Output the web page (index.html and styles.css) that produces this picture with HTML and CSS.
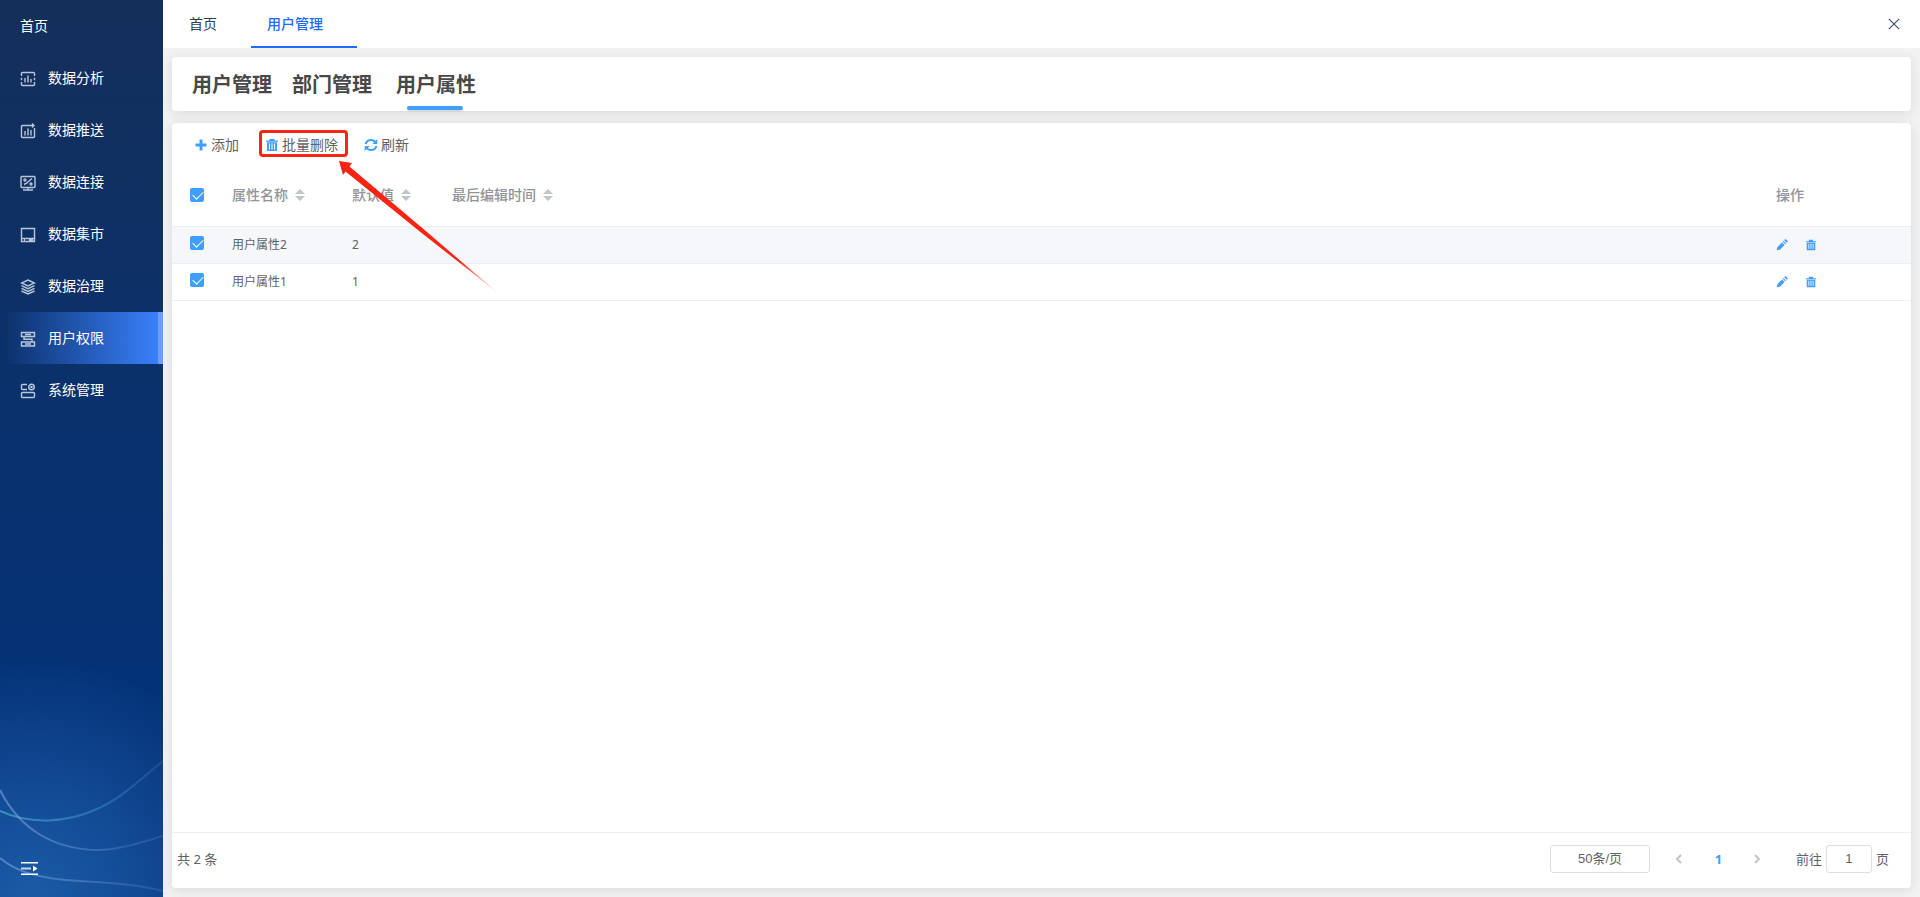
FILE: index.html
```html
<!DOCTYPE html>
<html lang="zh-CN">
<head>
<meta charset="utf-8">
<title>用户管理</title>
<link rel="stylesheet" href="styles.css">
</head>
<body>
<svg class="defs" aria-hidden="true">
  <symbol id="i-trash" viewBox="0 0 14 14"><path fill="currentColor" fill-rule="evenodd" d="M4.500 1h5v1.500H13v1.300H1V2.500h3.500zM2 4.300h10V13H2zM4 5.500v6h1v-6zm2.500 0v6h1v-6zm2.500 0v6h1v-6z"/></symbol>
  <symbol id="i-edit" viewBox="0 0 14 14"><path fill="currentColor" d="M8.800 2.200l3 3-1 1-3-3zM7 4l3 3-5.500 5.400L.800 13.200l.8-3.700zM9.600 1.400l.7-.7c.5-.5 1.100-.5 1.600 0l1.400 1.400c.5.500.5 1.100 0 1.600l-.7.7z"/></symbol>
  <symbol id="i-sort" viewBox="0 0 10 14"><path fill="currentColor" d="M5 1l5 5H0zM5 13l5-5H0z"/></symbol>
</svg>
<div class="app">
  <aside class="side">
    <svg class="waves" viewBox="0 0 163 217" preserveAspectRatio="none" fill="none" aria-hidden="true">
      <defs>
        <linearGradient id="w1"><stop offset="0" stop-color="#3fa3cc" stop-opacity=".8"/><stop offset="1" stop-color="#3f86cc" stop-opacity=".25"/></linearGradient>
        <linearGradient id="w2"><stop offset="0" stop-color="#7fa4e0" stop-opacity=".6"/><stop offset="1" stop-color="#7fa4e0" stop-opacity=".15"/></linearGradient>
      </defs>
      <path stroke="url(#w1)" stroke-width="2" d="M0 131C30 145 66 143 97 129 122 118 142 98 163 81"/>
      <path stroke="url(#w2)" stroke-width="2" d="M0 110C20 150 55 170 100 170 124 169 145 161 163 156"/>
      <path stroke="url(#w2)" stroke-width="2" d="M0 178C15 191 38 199 80 201 110 203 138 204 163 211"/>
    </svg>
    <nav class="menu">
      <a class="item" href="#">首页</a>
      <a class="item" href="#"><svg class="mi" viewBox="0 0 16 16"><path d="M1.500 5V2.500q0-1 1-1h11q1 0 1 1V5M1.500 11v2.500q0 1 1 1h11q1 0 1-1V11M1.500 6.800v2.400M14.500 6.800v2.400M5 7v4.500M8 4.500v7M11 8v3.500"/></svg>数据分析</a>
      <a class="item" href="#"><svg class="mi" viewBox="0 0 16 16"><path d="M14.500 5v8.500q0 1-1 1h-11q-1 0-1-1v-10q0-1 1-1H13.500M12 .500l2 2-2 2M5 8v4.500M8 5.500v7M11 7v5.500"/></svg>数据推送</a>
      <a class="item" href="#"><svg class="mi" viewBox="0 0 16 16"><path d="M2 1.500h12q1 0 1 1v9q0 1-1 1H2q-1 0-1-1v-9q0-1 1-1zM3 15h10M8 12.500V15M4 9.500L7 8l2-2 3-2.500"/><circle cx="5" cy="5" r="1"/><circle cx="11" cy="9" r="1"/></svg>数据连接</a>
      <a class="item" href="#"><svg class="mi" viewBox="0 0 16 16"><path d="M1.500 1.500h13v13h-13zM1.500 11.500h13M4 13h1M9 13h4"/></svg>数据集市</a>
      <a class="item" href="#"><svg class="mi" viewBox="0 0 16 16"><path d="M8 1l6.500 3L8 7 1.500 4zM1.500 6.700L8 9.700l6.500-3M1.500 9.400L8 12.400l6.500-3M1.500 12L8 15l6.500-3"/></svg>数据治理</a>
      <a class="item active" href="#" aria-current="page"><svg class="mi" viewBox="0 0 16 16"><path d="M1.500 1.500h13V5.500h-13zM1.500 11h13v4h-13zM5 3.500h6M5 13h6M4 5.500v2.800h8V11"/></svg>用户权限</a>
      <a class="item" href="#"><svg class="mi" viewBox="0 0 16 16"><path d="M7 1.500H2.500q-1 0-1 1v3q0 1 1 1H7M2.500 9.500h11q1 0 1 1v3q0 1-1 1h-11q-1 0-1-1v-3q0-1 1-1z"/><circle cx="11.500" cy="4" r="2.800"/><circle cx="11.500" cy="4" r=".6"/></svg>系统管理</a>
    </nav>
    <button class="fold" aria-label="展开菜单"><svg viewBox="0 0 17 13"><path fill="#fff" d="M0 0h17v1.500H0zM0 11.500h17V13H0zM12 3.500l4.500 3-4.500 3z"/><path fill="#c5d5ea" d="M0 5.500h10v2H0z"/></svg></button>
  </aside>
  <div class="main">
    <header class="tabs">
      <a class="tab" href="#">首页</a>
      <a class="tab on" href="#">用户管理</a>
      <button class="close" aria-label="关闭"><svg viewBox="0 0 12 12"><path fill="none" stroke="#41536a" stroke-width="1.200" d="M.800.800l10.400 10.400M11.200.800L.800 11.200"/></svg></button>
    </header>
    <main class="content">
      <nav class="card sections">
        <a href="#">用户管理</a>
        <a href="#">部门管理</a>
        <a class="cur" href="#">用户属性</a>
      </nav>
      <section class="card panel">
        <div class="tools">
          <button><svg viewBox="0 0 14 14"><path fill="currentColor" d="M5.500 1.500h3v4h4v3h-4v4h-3v-4h-4v-3h4z"/></svg><span>添加</span></button>
          <button class="marked"><svg viewBox="0 0 14 14"><use href="#i-trash"/></svg><span>批量删除</span>
            <i class="frame"></i>
            <svg class="arrow" viewBox="0 0 160 134" aria-hidden="true"><defs><linearGradient id="ar" gradientUnits="userSpaceOnUse" x1="0" y1="0" x2="159" y2="133"><stop offset=".75" stop-color="#fc2313"/><stop offset="1" stop-color="#fc2313" stop-opacity=".1"/></linearGradient></defs><path fill="url(#ar)" d="M0 0L13 2 10.500 5.500 85 68.500 159 132 82 71.500 6.500 10.500 4 14z"/></svg>
          </button>
          <button><svg viewBox="0 0 14 14"><path fill="none" stroke="currentColor" stroke-width="2" d="M1.600 6C2.300 3.400 4.500 1.900 7 1.900q2.500 0 4.400 2M12.400 8C11.700 10.600 9.500 12.100 7 12.100q-2.500 0-4.400-2"/><path fill="currentColor" d="M13.300 1v5H8.300zM.7 13V8h5z"/></svg><span>刷新</span></button>
        </div>
        <table class="grid">
          <colgroup><col class="c-check"><col class="c-name"><col class="c-val"><col><col class="c-op"></colgroup>
          <thead>
            <tr>
              <th><input type="checkbox" aria-label="全选" checked></th>
              <th>属性名称<svg class="sort" viewBox="0 0 10 14"><use href="#i-sort"/></svg></th>
              <th>默认值<svg class="sort" viewBox="0 0 10 14"><use href="#i-sort"/></svg></th>
              <th>最后编辑时间<svg class="sort" viewBox="0 0 10 14"><use href="#i-sort"/></svg></th>
              <th>操作</th>
            </tr>
          </thead>
          <tbody>
            <tr class="hover">
              <td><input type="checkbox" aria-label="选择用户属性2" checked></td><td>用户属性2</td><td>2</td><td></td>
              <td><div class="ops"><button aria-label="编辑"><svg viewBox="0 0 14 14"><use href="#i-edit"/></svg></button><button aria-label="删除"><svg viewBox="0 0 14 14"><use href="#i-trash"/></svg></button></div></td>
            </tr>
            <tr>
              <td><input type="checkbox" aria-label="选择用户属性1" checked></td><td>用户属性1</td><td>1</td><td></td>
              <td><div class="ops"><button aria-label="编辑"><svg viewBox="0 0 14 14"><use href="#i-edit"/></svg></button><button aria-label="删除"><svg viewBox="0 0 14 14"><use href="#i-trash"/></svg></button></div></td>
            </tr>
          </tbody>
        </table>
        <footer class="pager">
          <span class="total">共 2 条</span>
          <select aria-label="每页条数"><option>50条/页</option></select>
          <button class="step" aria-label="上一页"><svg viewBox="0 0 8 10"><path d="M6 1L2 5l4 4"/></svg></button>
          <button class="num">1</button>
          <button class="step" aria-label="下一页"><svg viewBox="0 0 8 10"><path d="M2 1l4 4-4 4"/></svg></button>
          <label class="jump">前往<input type="text" value="1">页</label>
        </footer>
      </section>
    </main>
  </div>
</div>
</body>
</html>
```
FILE: styles.css
```css
* { box-sizing: border-box; }
body {
  margin: 0;
  font: 14px/20px "Noto Sans", "Noto Sans CJK SC", sans-serif;
  color: #606266;
}
a { color: inherit; text-decoration: none; }
button {
  padding: 0;
  border: 0;
  background: none;
  font: inherit;
  color: inherit;
  cursor: pointer;
}
svg { display: block; flex: none; }
.defs { position: absolute; width: 0; height: 0; }

.app { display: flex; min-height: 100vh; background: #f2f2f2; }

.side {
  position: relative;
  display: flex;
  flex-direction: column;
  justify-content: space-between;
  flex: 0 0 163px;
  background:
    radial-gradient(circle at 20% 100%, #1b5ba6 0, rgba(22, 80, 155, .8) 110px, rgba(4, 50, 119, 0) 240px),
    linear-gradient(#142f5a, #0b316b 42%, #043277 78%);
}
.waves { position: absolute; left: 0; bottom: 0; width: 100%; height: 217px; }
.menu { position: relative; color: #fff; }
.item {
  display: flex;
  align-items: center;
  gap: 12px;
  height: 52px;
  padding: 0 20px;
}
.item.active {
  border-right: 5px solid #67a0ff;
  background: linear-gradient(90deg, rgba(59, 130, 255, 0) 5px, #3b82ff) border-box;
}
.mi {
  width: 16px;
  height: 16px;
  margin-top: 2px;
  fill: none;
  stroke: #b9c6da;
  stroke-width: 1.4;
}
.fold { position: relative; align-self: flex-start; margin: 0 0 22px 21px; }
.fold svg { width: 17px; height: 13px; }

.main { display: flex; flex-direction: column; flex: 1; min-width: 0; }
.tabs {
  display: flex;
  height: 48px;
  padding: 0 20px 0 10px;
  background: #fff;
  color: #2c3e50;
}
.tab { padding: 14px 34px 12px 16px; border-bottom: 2px solid transparent; }
.tab.on { color: #1b6cff; border-color: #1b6cff; font-weight: 500; }
.close { margin-left: auto; }
.close svg { width: 12px; height: 12px; }

.content {
  display: flex;
  flex-direction: column;
  flex: 1;
  gap: 12px;
  padding: 9px;
}
.card {
  border-radius: 4px;
  background: #fff;
  box-shadow: 0 2px 12px rgba(0, 0, 0, .1);
}
.sections {
  display: flex;
  gap: 20px;
  height: 54px;
  padding: 0 20px;
  font-size: 20px;
  font-weight: 700;
  line-height: 56px;
  color: #484848;
}
.sections .cur { position: relative; margin-left: 4px; }
.sections .cur::after {
  content: "";
  position: absolute;
  left: 11px;
  top: 49px;
  width: 56px;
  height: 4px;
  border-radius: 2px;
  background: #409eff;
  box-shadow: 0 1px 2px rgba(0, 0, 0, .2);
}
.panel { display: flex; flex-direction: column; flex: 1; }

.tools { display: flex; gap: 26px; padding: 12px 22px 10px; }
.tools button { display: flex; align-items: center; gap: 3px; }
.tools button > svg { width: 14px; height: 14px; color: #409eff; }
.tools .marked { position: relative; }
.frame {
  position: absolute;
  left: -6px;
  top: -5px;
  width: 89px;
  height: 27px;
  border: 3px solid #fc2313;
  border-radius: 4px;
}
.tools .marked .arrow {
  position: absolute;
  z-index: 1;
  left: 74px;
  top: 26px;
  width: 160px;
  height: 134px;
  pointer-events: none;
}

.grid { width: 100%; border-collapse: collapse; table-layout: fixed; font-size: 12px; }
.c-check { width: 50px; }
.c-name { width: 120px; }
.c-val { width: 100px; }
.c-op { width: 145px; }
.grid th, .grid td {
  padding: 0 0 0 10px;
  border-bottom: 1px solid #ebeef5;
  text-align: left;
}
.grid th {
  height: 61px;
  font-size: 14px;
  font-weight: 500;
  color: #909399;
}
.grid td { height: 37px; }
.grid th:first-child { padding-left: 18px; }
.grid td:first-child { padding: 0 0 3px 18px; }
.grid .hover { background: #f5f7fa; }
.sort {
  display: inline-block;
  width: 10px;
  height: 14px;
  margin-left: 7px;
  vertical-align: -2px;
  color: #c0c4cc;
}
input[type="checkbox"] {
  display: block;
  appearance: none;
  width: 14px;
  height: 14px;
  margin: 0;
  border-radius: 2px;
  background: #409eff;
}
input[type="checkbox"]:checked::after {
  content: "";
  display: block;
  width: 5px;
  height: 9px;
  margin: 1px 0 0 5px;
  border: solid #fff;
  border-width: 0 1px 1px 0;
  transform: rotate(45deg);
}
.ops { display: flex; gap: 17px; color: #409eff; }
.ops svg { width: 12px; height: 12px; }

.pager {
  display: flex;
  align-items: center;
  height: 56px;
  margin-top: auto;
  padding: 0 22px 4px 5px;
  border-top: 1px solid #ebeef5;
  font-size: 13px;
}
.total { margin-right: auto; }
.pager select, .pager input {
  height: 28px;
  border: 1px solid #dcdfe6;
  border-radius: 3px;
  background: #fff;
  font: 13px "Liberation Sans", "Noto Sans CJK SC", sans-serif;
  color: #606266;
  text-align: center;
}
.pager select { appearance: none; width: 100px; margin-right: 10px; text-align-last: center; }
.step, .num { display: flex; justify-content: center; width: 39px; }
.step svg {
  width: 8px;
  height: 10px;
  fill: none;
  stroke: #c0c4cc;
  stroke-width: 2;
}
.num { color: #409eff; font-weight: 700; }
.jump { display: flex; align-items: center; gap: 4px; margin-left: 19px; }
.jump input { width: 46px; }
```
